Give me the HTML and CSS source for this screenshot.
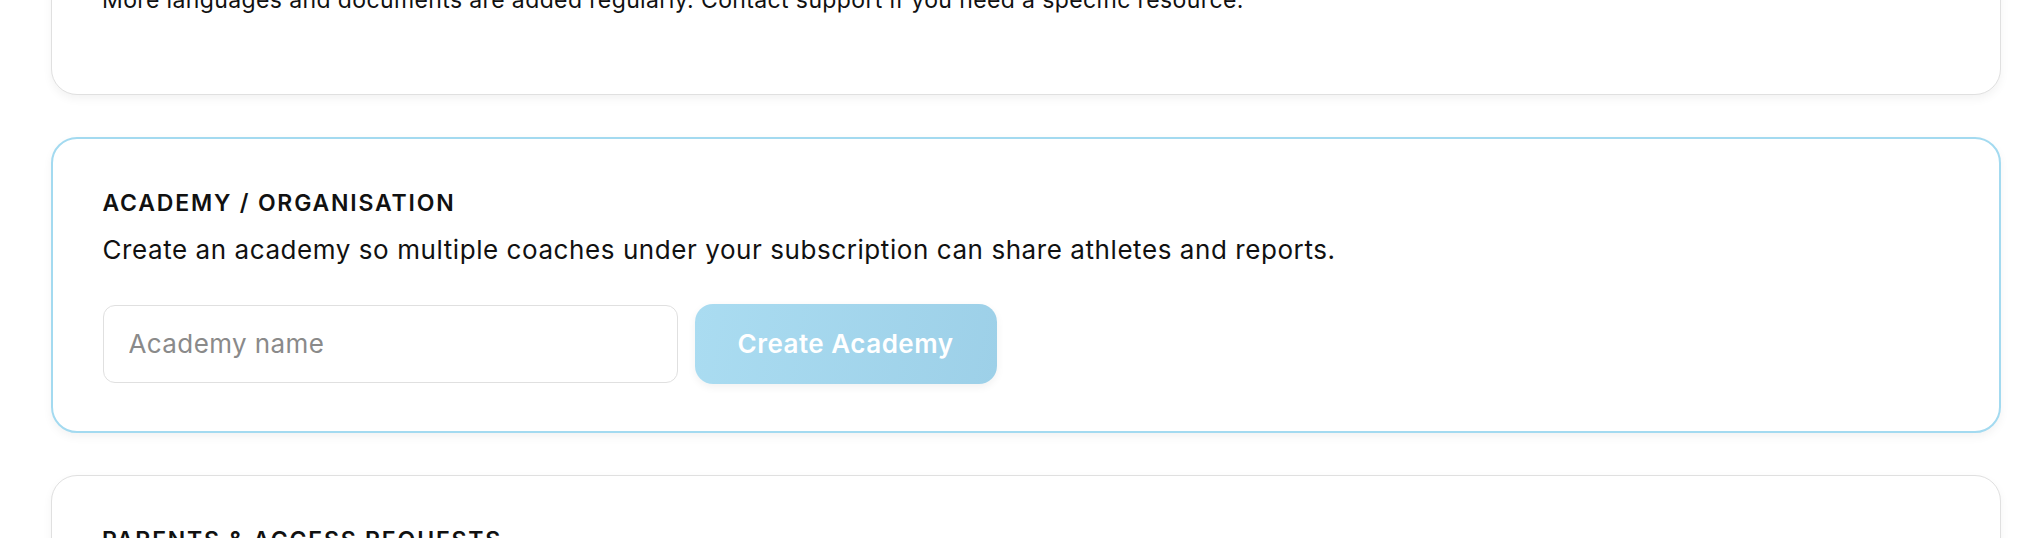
FILE: index.html
```html
<!DOCTYPE html>
<html lang="en">
<head>
<meta charset="utf-8">
<title>Settings</title>
<link rel="stylesheet" href="styles.css">
</head>
<body>
<main class="page">
  <section class="card card-resources">
    <p class="card-note">More languages and documents are added regularly. Contact support if you need a specific resource.</p>
  </section>

  <section class="card card-accent">
    <h2 class="card-title">Academy / Organisation</h2>
    <p class="card-text">Create an academy so multiple coaches under your subscription can share athletes and reports.</p>
    <form class="academy-form">
      <input class="field" type="text" placeholder="Academy name">
      <button class="btn-primary" type="button" disabled>Create Academy</button>
    </form>
  </section>

  <section class="card">
    <h2 class="card-title">Parents &amp; Access Requests</h2>
    <p class="card-text">Review parent access requests for your athletes.</p>
  </section>
</main>
</body>
</html>
```

FILE: styles.css
```css
* {
  box-sizing: border-box;
}

html, body {
  margin: 0;
  padding: 0;
  background: #ffffff;
}

body {
  font-family: Inter, "Noto Sans", "Liberation Sans", sans-serif;
  color: #111111;
  overflow: hidden;
}

.page {
  margin-top: -71px;
  padding: 0 43px 0 51px;
  display: flex;
  flex-direction: column;
  gap: 42px;
}

.card {
  background: #ffffff;
  border: 1.5px solid #e0e0e0;
  border-radius: 26px;
  padding: 50px 50px 48px;
  box-shadow: 0 4px 10px rgba(0, 0, 0, 0.05);
}

.card-accent {
  border: 2px solid #a3daf0;
  padding: 49.5px 49.5px 47.5px;
}

.card-title {
  margin: 0;
  font-size: 23px;
  line-height: 28px;
  font-weight: 600;
  letter-spacing: 1.8px;
  text-transform: uppercase;
  color: #111111;
}

.card-text {
  margin: 15px 0 0;
  font-size: 26px;
  line-height: 36px;
  font-weight: 400;
  letter-spacing: 0.57px;
  color: #111111;
}

.card-note {
  margin: 4px 0 30px;
  font-size: 23px;
  line-height: 32px;
  font-weight: 400;
  letter-spacing: 0.38px;
  color: #111111;
}

.academy-form {
  margin-top: 36px;
  display: flex;
  align-items: center;
  gap: 17px;
}

.field {
  width: 575px;
  height: 78px;
  padding: 0 25px;
  border: 1.5px solid #e0e0e0;
  border-radius: 12px;
  background: #ffffff;
  font-family: inherit;
  font-size: 26px;
  letter-spacing: 0.4px;
  color: #111111;
  outline: none;
}

.field::placeholder {
  color: #8a8a8a;
}

.btn-primary {
  width: 302px;
  height: 80px;
  border: none;
  border-radius: 18px;
  background: linear-gradient(100deg, #aadcf1 0%, #9dd0e8 100%);
  color: #ffffff;
  font-family: inherit;
  font-size: 26px;
  font-weight: 600;
  letter-spacing: 0.5px;
  box-shadow: 0 3px 8px rgba(0, 0, 0, 0.06);
  cursor: default;
}
```
